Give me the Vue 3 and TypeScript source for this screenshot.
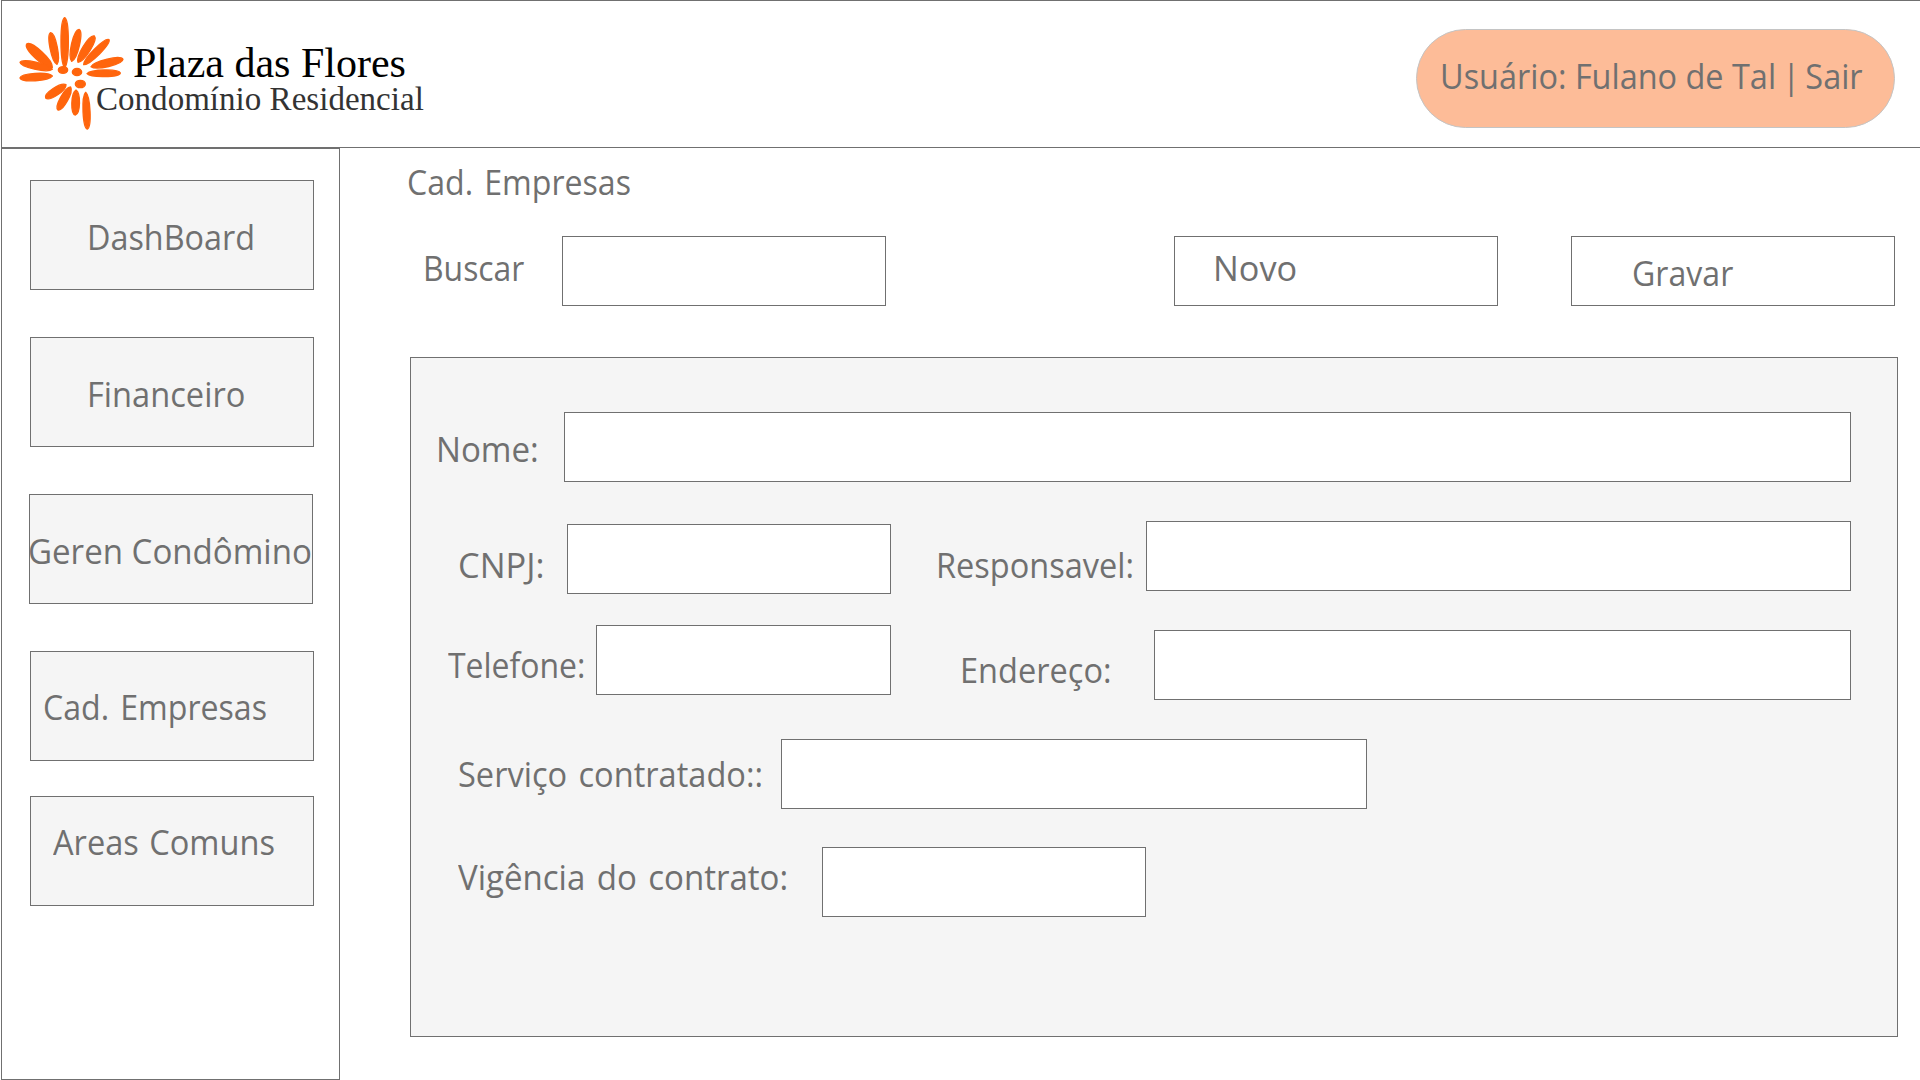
<script setup lang="ts">
import { ref } from 'vue'

interface Item {
  id: string
  label: string
}

const menu: Item[] = [
  { id: 'dashboard', label: 'DashBoard' },
  { id: 'financeiro', label: 'Financeiro' },
  { id: 'condomino', label: 'Geren Condômino' },
  { id: 'empresas', label: 'Cad. Empresas' },
  { id: 'areas', label: 'Areas Comuns' },
]

const rows: Item[][] = [
  [{ id: 'nome', label: 'Nome:' }],
  [
    { id: 'cnpj', label: 'CNPJ:' },
    { id: 'responsavel', label: 'Responsavel:' },
  ],
  [
    { id: 'telefone', label: 'Telefone:' },
    { id: 'endereco', label: 'Endereço:' },
  ],
  [{ id: 'servico', label: 'Serviço contratado::' }],
  [{ id: 'vigencia', label: 'Vigência do contrato:' }],
]

const form = ref<Record<string, string>>({})
const search = ref('')

// base x, base y, tip x, tip y, width
type Petal = [number, number, number, number, number]

const petals: Petal[] = [
  [194, 203, 194, 53, 22],
  [171, 193, 152, 98, 22],
  [215, 184, 237, 88, 24],
  [234, 187, 283, 108, 24],
  [251, 194, 327, 119, 21],
  [273, 200, 369, 178, 23],
  [261, 221, 361, 219, 20],
  [157, 203, 80, 132, 27],
  [157, 208, 60, 187, 22],
  [157, 228, 60, 234, 22],
  [198, 254, 137, 294, 23],
  [212, 261, 174, 330, 23],
  [228, 270, 226, 345, 23],
  [257, 277, 262, 387, 21],
]

function petalPath([bx, by, tx, ty, w]: Petal): string {
  const dx = tx - bx
  const dy = ty - by
  const len = Math.hypot(dx, dy)
  const h = w / 1.5
  const nx = (-dy / len) * h
  const ny = (dx / len) * h
  const at = (t: number, side: number) =>
    `${(bx + dx * t + nx * side).toFixed(1)} ${(by + dy * t + ny * side).toFixed(1)}`
  return `M${bx} ${by}C${at(0.12, 1)} ${at(0.96, 1)} ${tx} ${ty}C${at(0.96, -1)} ${at(0.12, -1)} ${bx} ${by}Z`
}
</script>

<template>
  <div class="page">
    <header class="header">
      <svg class="flower" viewBox="54 42 324 354" aria-hidden="true">
        <path v-for="(p, i) in petals" :key="i" :d="petalPath(p)" />
        <ellipse cx="189" cy="210" rx="14" ry="10" />
        <ellipse cx="231" cy="216" rx="14" ry="11" />
        <ellipse cx="241" cy="252" rx="15" ry="11" />
      </svg>
      <div class="brand">
        <div class="brand-name">Plaza das Flores</div>
        <div class="brand-sub">Condomínio Residencial</div>
      </div>
      <div class="user">
        <span class="text">Usuário: Fulano de Tal <span class="bar">|</span> Sair</span>
      </div>
    </header>

    <div class="body">
      <nav class="sidebar">
        <a v-for="m in menu" :key="m.id" class="menu-item" :class="m.id">
          <span class="text">{{ m.label }}</span>
        </a>
      </nav>

      <main class="main">
        <div class="title"><span class="text">Cad. Empresas</span></div>

        <div class="toolbar">
          <label class="field search">
            <span class="text">Buscar</span>
            <input v-model="search" type="text" />
          </label>
          <button class="action novo" type="button"><span class="text">Novo</span></button>
          <button class="action gravar" type="button"><span class="text">Gravar</span></button>
        </div>

        <form class="panel" @submit.prevent>
          <div v-for="(row, i) in rows" :key="i" class="row">
            <label v-for="f in row" :key="f.id" class="field" :class="f.id">
              <span class="text">{{ f.label }}</span>
              <input v-model="form[f.id]" type="text" />
            </label>
          </div>
        </form>
      </main>
    </div>
  </div>
</template>

<style>
body {
  background: #fff;
  overflow: hidden;
}
</style>

<style scoped>
.page {
  width: 1920px;
  height: 1080px;
  overflow: hidden;
  display: flex;
  flex-direction: column;
  color: #707070;
  font: 35px/48px 'Open Sans', 'Noto Sans', sans-serif;
}

.page * {
  box-sizing: border-box;
}

.text {
  flex: none;
  margin: var(--y) -40px 0 var(--x);
  height: 48px;
  white-space: nowrap;
  transform: scaleX(var(--s));
  transform-origin: 0 0;
}

.header {
  flex: none;
  display: flex;
  align-items: flex-start;
  height: 148px;
  margin-left: 1px;
  border: 1px solid #707070;
  border-right: 0;
}

.flower {
  flex: none;
  width: 108px;
  height: 118px;
  margin: 13px 0 0 16px;
  fill: #ff650d;
  stroke: #ff650d;
  stroke-width: 4;
  stroke-linejoin: round;
}

.brand {
  position: relative;
  margin: 39px 0 0 -30px;
  font-family: 'Liberation Serif', serif;
  white-space: nowrap;
}

.brand-name {
  height: 41px;
  padding-left: 37px;
  color: #000;
  font-size: 42px;
  line-height: 46px;
}

.brand-sub {
  color: #333;
  font-size: 33px;
  line-height: 36px;
  letter-spacing: 0.03px;
}

.user {
  display: flex;
  width: 479px;
  height: 99px;
  margin: 28px 25px 0 auto;
  border: 1px solid #c4c4c4;
  border-radius: 49.5px;
  background: #fdbc98;
  --x: 22.5px;
  --y: 22px;
  --s: 0.9265;
}

.bar {
  margin: 0 -3.5px 0 -2.3px;
}

.body {
  flex: 1;
  display: flex;
  min-height: 0;
}

.sidebar {
  flex: none;
  display: flex;
  flex-direction: column;
  gap: 47px;
  width: 339px;
  margin-left: 1px;
  padding: 31px 0 0 28px;
  border: 1px solid #707070;
}

.menu-item {
  flex: none;
  display: flex;
  width: 284px;
  height: 110px;
  border: 1px solid #707070;
  background: #f5f5f5;
}

.dashboard { --x: 55.6px; --y: 32px; --s: 0.924; }
.financeiro { --x: 55.6px; --y: 32px; --s: 0.932; }
.condomino { --x: -2.4px; --y: 32px; --s: 0.945; margin-left: -1px; }
.empresas { --x: 11.8px; --y: 31px; --s: 0.917; word-spacing: 3px; }
.areas { --x: 22px; --y: 21px; --s: 0.931; margin-top: -12px; word-spacing: 2px; }

.main {
  flex: 1;
  display: flex;
  flex-direction: column;
  min-width: 0;
}

.title {
  display: flex;
  padding-top: 10px;
  word-spacing: 3px;
  --x: 67.1px;
  --y: 0px;
  --s: 0.917;
}

.toolbar {
  display: flex;
  margin-top: 30px;
}

.field {
  flex: none;
  display: flex;
  align-items: flex-start;
}

.field input {
  flex: none;
  width: 324px;
  height: 70px;
  margin: 0 0 0 auto;
  padding: 0 12px;
  border: 1px solid #707070;
  border-radius: 0;
  background: #fff;
  color: inherit;
  font: inherit;
  outline: none;
}

.search { width: 546px; --x: 83.3px; --y: 8px; --s: 0.911; }

.action {
  flex: none;
  display: flex;
  align-items: flex-start;
  width: 324px;
  height: 70px;
  padding: 0;
  border: 1px solid #707070;
  background: #fff;
  color: inherit;
  font: inherit;
}

.novo { margin-left: 288px; --x: 37.6px; --y: 7px; --s: 0.979; }
.gravar { margin-left: 73px; --x: 60px; --y: 12px; --s: 0.917; }

.panel {
  display: flex;
  flex-direction: column;
  width: 1488px;
  height: 680px;
  margin: 51px 0 0 70px;
  padding-top: 54px;
  border: 1px solid #707070;
  background: #f5f5f5;
}

.row {
  display: flex;
  align-items: flex-start;
}

.row:nth-child(2) { margin-top: 39px; }
.row:nth-child(3) { margin-top: 31px; }
.row:nth-child(4) { margin-top: 39px; }
.row:nth-child(5) { margin-top: 38px; }

.nome { width: 1440px; --x: 25.4px; --y: 13px; --s: 0.946; }
.nome input { width: 1287px; }
.cnpj { width: 480px; padding-top: 3px; --x: 46.8px; --y: 17px; --s: 0.982; }
.responsavel { width: 960px; --x: 45.2px; --y: 20px; --s: 0.929; }
.responsavel input { width: 705px; }
.telefone { width: 480px; --x: 37.2px; --y: 16px; --s: 0.913; }
.telefone input { width: 295px; }
.endereco { width: 960px; padding-top: 5px; --x: 68.8px; --y: 16px; --s: 0.93; }
.endereco input { width: 697px; }
.servico { width: 956px; --x: 47px; --y: 11px; --s: 0.931; word-spacing: 3px; }
.servico input { width: 586px; }
.vigencia { width: 735px; --x: 47.2px; --y: 6px; --s: 0.944; word-spacing: 3px; }
</style>
